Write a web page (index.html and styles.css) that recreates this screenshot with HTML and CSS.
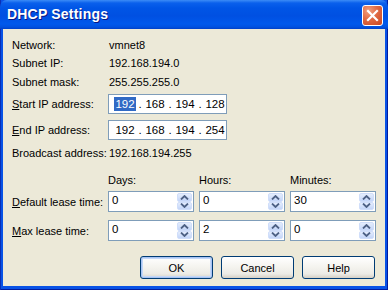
FILE: index.html
```html
<!DOCTYPE html>
<html>
<head>
<meta charset="utf-8">
<link rel="stylesheet" href="styles.css">
</head>
<body>
<div class="window">
  <div class="titlebar">
    <span class="title">DHCP Settings</span>
    <div class="close">
      <svg width="21" height="21" viewBox="0 0 21 21"><path d="M6 6 L15 15 M15 6 L6 15" stroke="#fff" stroke-width="2.2" stroke-linecap="square"/></svg>
    </div>
  </div>
  <div class="client">
    <div class="info r1"><span class="lbl">Network:</span><span class="val">vmnet8</span></div>
    <div class="info r2"><span class="lbl">Subnet IP:</span><span class="val">192.168.194.0</span></div>
    <div class="info r3"><span class="lbl">Subnet mask:</span><span class="val">255.255.255.0</span></div>

    <div class="iprow start">
      <span class="lbl"><u>S</u>tart IP address:</span>
      <div class="ipbox">
        <span class="oct"><span class="sel">192</span></span><span class="dot">.</span>
        <span class="oct">168</span><span class="dot">.</span>
        <span class="oct">194</span><span class="dot">.</span>
        <span class="oct">128</span>
      </div>
    </div>
    <div class="iprow end">
      <span class="lbl"><u>E</u>nd IP address:</span>
      <div class="ipbox">
        <span class="oct">192</span><span class="dot">.</span>
        <span class="oct">168</span><span class="dot">.</span>
        <span class="oct">194</span><span class="dot">.</span>
        <span class="oct">254</span>
      </div>
    </div>
    <div class="info bcast"><span class="lbl">Broadcast address:</span><span class="val">192.168.194.255</span></div>

    <div class="lease heads">
      <span class="lbl"></span>
      <span class="col">Days:</span>
      <span class="col">Hours:</span>
      <span class="col">Minutes:</span>
    </div>
    <div class="lease row1">
      <span class="lbl"><u>D</u>efault lease time:</span>
      <div class="spin"><span class="num">0</span><div class="btns"><div class="up"><svg width="9" height="5" viewBox="0 0 9 5"><path d="M1 4.5 L4.5 1 L8 4.5" fill="none" stroke="#4D6185" stroke-width="1.8"/></svg></div><div class="dn"><svg width="9" height="5" viewBox="0 0 9 5"><path d="M1 0.5 L4.5 4 L8 0.5" fill="none" stroke="#4D6185" stroke-width="1.8"/></svg></div></div></div>
      <div class="spin"><span class="num">0</span><div class="btns"><div class="up"><svg width="9" height="5" viewBox="0 0 9 5"><path d="M1 4.5 L4.5 1 L8 4.5" fill="none" stroke="#4D6185" stroke-width="1.8"/></svg></div><div class="dn"><svg width="9" height="5" viewBox="0 0 9 5"><path d="M1 0.5 L4.5 4 L8 0.5" fill="none" stroke="#4D6185" stroke-width="1.8"/></svg></div></div></div>
      <div class="spin"><span class="num">30</span><div class="btns"><div class="up"><svg width="9" height="5" viewBox="0 0 9 5"><path d="M1 4.5 L4.5 1 L8 4.5" fill="none" stroke="#4D6185" stroke-width="1.8"/></svg></div><div class="dn"><svg width="9" height="5" viewBox="0 0 9 5"><path d="M1 0.5 L4.5 4 L8 0.5" fill="none" stroke="#4D6185" stroke-width="1.8"/></svg></div></div></div>
    </div>
    <div class="lease row2">
      <span class="lbl"><u>M</u>ax lease time:</span>
      <div class="spin"><span class="num">0</span><div class="btns"><div class="up"><svg width="9" height="5" viewBox="0 0 9 5"><path d="M1 4.5 L4.5 1 L8 4.5" fill="none" stroke="#4D6185" stroke-width="1.8"/></svg></div><div class="dn"><svg width="9" height="5" viewBox="0 0 9 5"><path d="M1 0.5 L4.5 4 L8 0.5" fill="none" stroke="#4D6185" stroke-width="1.8"/></svg></div></div></div>
      <div class="spin"><span class="num">2</span><div class="btns"><div class="up"><svg width="9" height="5" viewBox="0 0 9 5"><path d="M1 4.5 L4.5 1 L8 4.5" fill="none" stroke="#4D6185" stroke-width="1.8"/></svg></div><div class="dn"><svg width="9" height="5" viewBox="0 0 9 5"><path d="M1 0.5 L4.5 4 L8 0.5" fill="none" stroke="#4D6185" stroke-width="1.8"/></svg></div></div></div>
      <div class="spin"><span class="num">0</span><div class="btns"><div class="up"><svg width="9" height="5" viewBox="0 0 9 5"><path d="M1 4.5 L4.5 1 L8 4.5" fill="none" stroke="#4D6185" stroke-width="1.8"/></svg></div><div class="dn"><svg width="9" height="5" viewBox="0 0 9 5"><path d="M1 0.5 L4.5 4 L8 0.5" fill="none" stroke="#4D6185" stroke-width="1.8"/></svg></div></div></div>
    </div>

    <div class="buttons">
      <button class="btn default">OK</button>
      <button class="btn">Cancel</button>
      <button class="btn">Help</button>
    </div>
  </div>
</div>
</body>
</html>
```

FILE: styles.css
```css
html, body {
  margin: 0;
  padding: 0;
  background: #ECE9D8;
}

.window {
  width: 388px;
  height: 290px;
  box-sizing: border-box;
  display: flex;
  flex-direction: column;
  background: #0852E6;
  box-shadow: inset 1px 0 #0A2FB5, inset -1px 0 #001C9E, inset 0 -1px #001C9E;
  font-family: "Liberation Sans", Arial, sans-serif;
  font-size: 11px;
  color: #000;
}

.titlebar {
  height: 29px;
  flex: none;
  display: flex;
  align-items: flex-start;
  border-radius: 7px 7px 0 0;
  background: linear-gradient(to bottom, #3C8CF6 0px, #0A60EC 3px, #0055E6 8px, #0050E2 16px, #0059EC 24px, #0051E0 27px, #0040C8 29px);
}

.title {
  color: #fff;
  font-weight: bold;
  font-size: 14px;
  line-height: 29px;
  padding-left: 7px;
  text-shadow: 1px 1px #0A1883;
  letter-spacing: 0.2px;
}

.close {
  margin-left: auto;
  margin-right: 5px;
  margin-top: 5px;
  width: 21px;
  height: 21px;
  box-sizing: border-box;
  border: 1px solid #fff;
  border-radius: 3px;
  background: radial-gradient(circle at 30% 25%, #F0A080 0%, #E06A44 45%, #C84520 100%);
  display: flex;
}

.close svg {
  margin: -1px;
}

.client {
  flex: 1;
  margin: 0 3px 4px 3px;
  background: #ECE9D8;
  padding: 7px 0 0 9px;
  display: flex;
  flex-direction: column;
}

.lbl {
  width: 96px;
  flex: none;
}

.info {
  display: flex;
  align-items: center;
  height: 18px;
}

.info .val {
  padding-left: 1px;
}

.info.r3 {
  margin-top: 1px;
}

.info.bcast {
  margin-top: 4px;
}

.iprow {
  display: flex;
  align-items: center;
  height: 20px;
}

.iprow.start {
  margin-top: 3px;
}

.iprow.end {
  margin-top: 6px;
}

.ipbox {
  width: 119px;
  height: 20px;
  box-sizing: border-box;
  border: 1px solid #7F9DB9;
  background: #fff;
  display: flex;
  align-items: center;
  padding-left: 5px;
  font-size: 11.5px;
}

.oct {
  width: 22px;
  text-align: center;
}

.dot {
  width: 8px;
  text-align: center;
}

.sel {
  background: #316AC5;
  color: #fff;
  padding: 1px 1px;
}

.lease {
  display: flex;
  align-items: center;
  gap: 5px;
}

.lease .lbl {
  margin-right: -5px;
}

.lease.heads {
  height: 18px;
  margin-top: 9px;
}

.col {
  width: 86px;
}

.lease.row1 {
  height: 21px;
  margin-top: 2px;
}

.lease.row2 {
  height: 21px;
  margin-top: 8px;
}

.spin {
  width: 86px;
  height: 21px;
  box-sizing: border-box;
  border: 1px solid #7F9DB9;
  background: #fff;
  display: flex;
}

.spin .num {
  flex: 1;
  padding-left: 3px;
  line-height: 17px;
  font-size: 11.5px;
}

.btns {
  width: 15px;
  margin: 1px 1px 1px 0;
  display: flex;
  flex-direction: column;
}

.btns .up,
.btns .dn {
  flex: 1;
  display: flex;
  align-items: center;
  justify-content: center;
  background: linear-gradient(to bottom, #E4EDFD, #C3D5F8);
  border-radius: 2px;
  box-sizing: border-box;
  border: 1px solid #D0DEFA;
}

.buttons {
  display: flex;
  justify-content: flex-end;
  gap: 8px;
  margin-top: 15px;
  padding-right: 10px;
}

.btn {
  width: 73px;
  height: 23px;
  box-sizing: border-box;
  border: 1px solid #003C74;
  border-radius: 3px;
  background: linear-gradient(to bottom, #FFFFFF 0%, #F4F3EE 50%, #ECEBE6 80%, #D6D0C5 100%);
  font-family: "Liberation Sans", Arial, sans-serif;
  font-size: 11px;
  color: #000;
  padding: 0;
}

.btn.default {
  box-shadow: inset 0 0 0 1px #A8C4F4, inset 0 0 0 2px #C4D8F8;
}
```
